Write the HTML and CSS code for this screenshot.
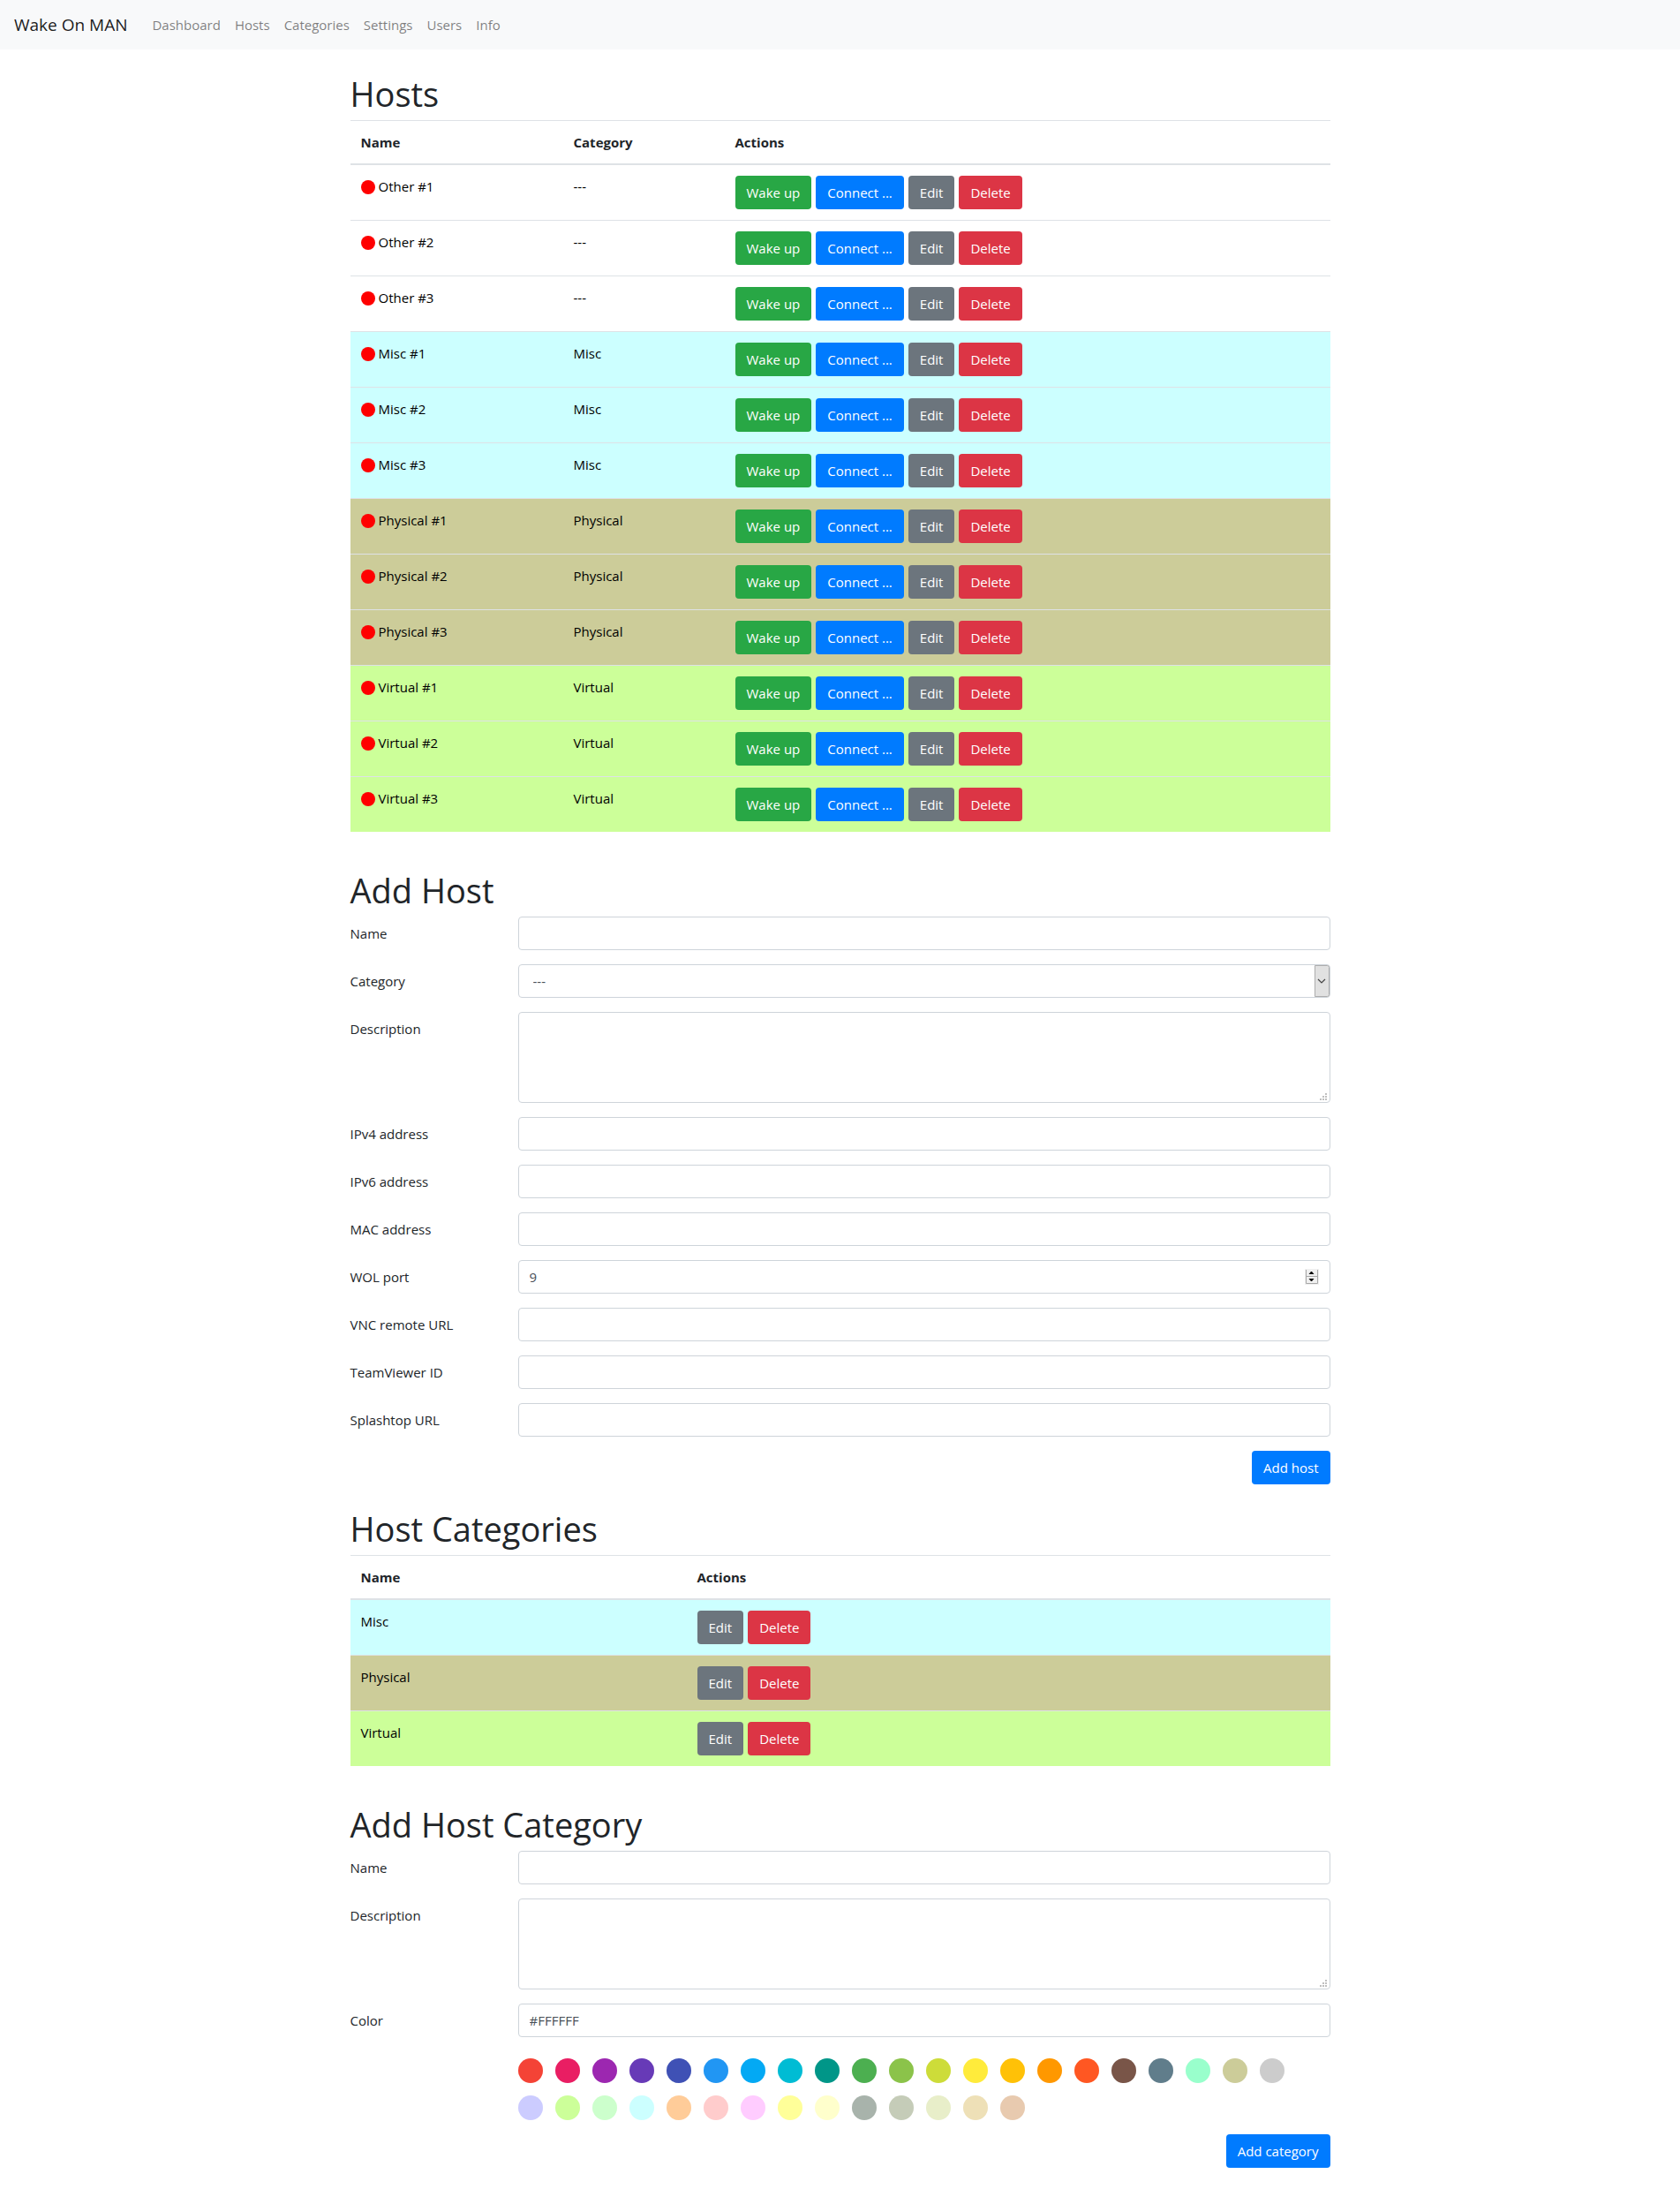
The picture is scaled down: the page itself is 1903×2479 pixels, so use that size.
FILE: index.html
```html
<!DOCTYPE html>
<html lang="en">
<head>
<meta charset="utf-8">
<meta name="viewport" content="width=device-width, initial-scale=1">
<title>Wake On MAN</title>
<link rel="stylesheet" href="styles.css">
</head>
<body>
<nav class="navbar">
  <a class="brand" href="#">Wake On MAN</a>
  <ul class="nav-links">
    <li><a href="#">Dashboard</a></li>
    <li><a href="#hosts">Hosts</a></li>
    <li><a href="#categories">Categories</a></li>
    <li><a href="#">Settings</a></li>
    <li><a href="#">Users</a></li>
    <li><a href="#">Info</a></li>
  </ul>
</nav>
<main class="container">
  <section class="block" id="hosts">
    <h1>Hosts</h1>
    <table class="table">
      <colgroup><col class="col-host"><col class="col-category"><col></colgroup>
      <thead><tr><th scope="col">Name</th><th scope="col">Category</th><th scope="col">Actions</th></tr></thead>
      <tbody>
        <tr><td><span class="status"></span>Other #1</td><td>---</td><td><div class="actions"><button type="button" class="btn success">Wake up</button><button type="button" class="btn primary">Connect ...</button><button type="button" class="btn secondary">Edit</button><button type="button" class="btn danger">Delete</button></div></td></tr>
        <tr><td><span class="status"></span>Other #2</td><td>---</td><td><div class="actions"><button type="button" class="btn success">Wake up</button><button type="button" class="btn primary">Connect ...</button><button type="button" class="btn secondary">Edit</button><button type="button" class="btn danger">Delete</button></div></td></tr>
        <tr><td><span class="status"></span>Other #3</td><td>---</td><td><div class="actions"><button type="button" class="btn success">Wake up</button><button type="button" class="btn primary">Connect ...</button><button type="button" class="btn secondary">Edit</button><button type="button" class="btn danger">Delete</button></div></td></tr>
        <tr class="misc"><td><span class="status"></span>Misc #1</td><td>Misc</td><td><div class="actions"><button type="button" class="btn success">Wake up</button><button type="button" class="btn primary">Connect ...</button><button type="button" class="btn secondary">Edit</button><button type="button" class="btn danger">Delete</button></div></td></tr>
        <tr class="misc"><td><span class="status"></span>Misc #2</td><td>Misc</td><td><div class="actions"><button type="button" class="btn success">Wake up</button><button type="button" class="btn primary">Connect ...</button><button type="button" class="btn secondary">Edit</button><button type="button" class="btn danger">Delete</button></div></td></tr>
        <tr class="misc"><td><span class="status"></span>Misc #3</td><td>Misc</td><td><div class="actions"><button type="button" class="btn success">Wake up</button><button type="button" class="btn primary">Connect ...</button><button type="button" class="btn secondary">Edit</button><button type="button" class="btn danger">Delete</button></div></td></tr>
        <tr class="physical"><td><span class="status"></span>Physical #1</td><td>Physical</td><td><div class="actions"><button type="button" class="btn success">Wake up</button><button type="button" class="btn primary">Connect ...</button><button type="button" class="btn secondary">Edit</button><button type="button" class="btn danger">Delete</button></div></td></tr>
        <tr class="physical"><td><span class="status"></span>Physical #2</td><td>Physical</td><td><div class="actions"><button type="button" class="btn success">Wake up</button><button type="button" class="btn primary">Connect ...</button><button type="button" class="btn secondary">Edit</button><button type="button" class="btn danger">Delete</button></div></td></tr>
        <tr class="physical"><td><span class="status"></span>Physical #3</td><td>Physical</td><td><div class="actions"><button type="button" class="btn success">Wake up</button><button type="button" class="btn primary">Connect ...</button><button type="button" class="btn secondary">Edit</button><button type="button" class="btn danger">Delete</button></div></td></tr>
        <tr class="virtual"><td><span class="status"></span>Virtual #1</td><td>Virtual</td><td><div class="actions"><button type="button" class="btn success">Wake up</button><button type="button" class="btn primary">Connect ...</button><button type="button" class="btn secondary">Edit</button><button type="button" class="btn danger">Delete</button></div></td></tr>
        <tr class="virtual"><td><span class="status"></span>Virtual #2</td><td>Virtual</td><td><div class="actions"><button type="button" class="btn success">Wake up</button><button type="button" class="btn primary">Connect ...</button><button type="button" class="btn secondary">Edit</button><button type="button" class="btn danger">Delete</button></div></td></tr>
        <tr class="virtual"><td><span class="status"></span>Virtual #3</td><td>Virtual</td><td><div class="actions"><button type="button" class="btn success">Wake up</button><button type="button" class="btn primary">Connect ...</button><button type="button" class="btn secondary">Edit</button><button type="button" class="btn danger">Delete</button></div></td></tr>
      </tbody>
    </table>
  </section>

  <section class="block">
    <h1>Add Host</h1>
    <form class="form">
      <div class="row"><label for="host-name">Name</label><input class="control" id="host-name" type="text"></div>
      <div class="row"><label for="host-category">Category</label>
        <div class="field">
          <select class="control" id="host-category"><option>---</option><option>Misc</option><option>Physical</option><option>Virtual</option></select>
          <svg class="drop" viewBox="0 0 17 36" aria-hidden="true"><path d="M.5.5h14q2 0 2 2v31q0 2-2 2H.5z" fill="#e1e1e1" stroke="#adadad"/><path d="M4 16l4 4 4-4" fill="none" stroke="#444" stroke-width="1.200"/></svg>
        </div>
      </div>
      <div class="row"><label for="host-description">Description</label><textarea class="control" id="host-description"></textarea></div>
      <div class="row"><label for="host-ipv4">IPv4 address</label><input class="control" id="host-ipv4" type="text"></div>
      <div class="row"><label for="host-ipv6">IPv6 address</label><input class="control" id="host-ipv6" type="text"></div>
      <div class="row"><label for="host-mac">MAC address</label><input class="control" id="host-mac" type="text"></div>
      <div class="row"><label for="host-port">WOL port</label>
        <div class="field">
          <input class="control" id="host-port" type="number" value="9">
          <svg class="spin" viewBox="0 0 16 18" aria-hidden="true"><path d="M0 0h16v18H0z" fill="#f0f0f0"/><path d="M1.500 1v15.500h13V1M1 8.500h14" fill="none" stroke="#a8a8a8"/><path d="M4.500 6h6L8 3H7zM4.500 11h6L8 14H7z" fill="#000"/></svg>
        </div>
      </div>
      <div class="row"><label for="host-vnc">VNC remote URL</label><input class="control" id="host-vnc" type="text"></div>
      <div class="row"><label for="host-teamviewer">TeamViewer ID</label><input class="control" id="host-teamviewer" type="text"></div>
      <div class="row"><label for="host-splashtop">Splashtop URL</label><input class="control" id="host-splashtop" type="text"></div>
      <div class="submit"><button type="button" class="btn primary">Add host</button></div>
    </form>
  </section>

  <section class="block" id="categories">
    <h1>Host Categories</h1>
    <table class="table">
      <colgroup><col class="col-name"><col></colgroup>
      <thead><tr><th scope="col">Name</th><th scope="col">Actions</th></tr></thead>
      <tbody>
        <tr class="misc"><td>Misc</td><td><div class="actions"><button type="button" class="btn secondary">Edit</button><button type="button" class="btn danger">Delete</button></div></td></tr>
        <tr class="physical"><td>Physical</td><td><div class="actions"><button type="button" class="btn secondary">Edit</button><button type="button" class="btn danger">Delete</button></div></td></tr>
        <tr class="virtual"><td>Virtual</td><td><div class="actions"><button type="button" class="btn secondary">Edit</button><button type="button" class="btn danger">Delete</button></div></td></tr>
      </tbody>
    </table>
  </section>

  <section class="block">
    <h1>Add Host Category</h1>
    <form class="form">
      <div class="row"><label for="cat-name">Name</label><input class="control" id="cat-name" type="text"></div>
      <div class="row"><label for="cat-description">Description</label><textarea class="control" id="cat-description"></textarea></div>
      <div class="row"><label for="cat-color">Color</label>
        <div>
          <input class="control" id="cat-color" type="text" value="#FFFFFF">
          <div class="swatches">
            <button type="button" aria-label="#F44336" style="background:#f44336"></button>
            <button type="button" aria-label="#E91E63" style="background:#e91e63"></button>
            <button type="button" aria-label="#9C27B0" style="background:#9c27b0"></button>
            <button type="button" aria-label="#673AB7" style="background:#673ab7"></button>
            <button type="button" aria-label="#3F51B5" style="background:#3f51b5"></button>
            <button type="button" aria-label="#2196F3" style="background:#2196f3"></button>
            <button type="button" aria-label="#03A9F4" style="background:#03a9f4"></button>
            <button type="button" aria-label="#00BCD4" style="background:#00bcd4"></button>
            <button type="button" aria-label="#009688" style="background:#009688"></button>
            <button type="button" aria-label="#4CAF50" style="background:#4caf50"></button>
            <button type="button" aria-label="#8BC34A" style="background:#8bc34a"></button>
            <button type="button" aria-label="#CDDC39" style="background:#cddc39"></button>
            <button type="button" aria-label="#FFEB3B" style="background:#ffeb3b"></button>
            <button type="button" aria-label="#FFC107" style="background:#ffc107"></button>
            <button type="button" aria-label="#FF9800" style="background:#ff9800"></button>
            <button type="button" aria-label="#FF5722" style="background:#ff5722"></button>
            <button type="button" aria-label="#795548" style="background:#795548"></button>
            <button type="button" aria-label="#607D8B" style="background:#607d8b"></button>
            <button type="button" aria-label="#99FFCC" style="background:#99ffcc"></button>
            <button type="button" aria-label="#CCCC99" style="background:#cccc99"></button>
            <button type="button" aria-label="#CCCCCC" style="background:#cccccc"></button>
            <button type="button" aria-label="#CCCCFF" style="background:#ccccff"></button>
            <button type="button" aria-label="#CCFF99" style="background:#ccff99"></button>
            <button type="button" aria-label="#CCFFCC" style="background:#ccffcc"></button>
            <button type="button" aria-label="#CCFFFF" style="background:#ccffff"></button>
            <button type="button" aria-label="#FFCC99" style="background:#ffcc99"></button>
            <button type="button" aria-label="#FFCCCC" style="background:#ffcccc"></button>
            <button type="button" aria-label="#FFCCFF" style="background:#ffccff"></button>
            <button type="button" aria-label="#FFFF99" style="background:#ffff99"></button>
            <button type="button" aria-label="#FFFFCC" style="background:#ffffcc"></button>
            <button type="button" aria-label="#A8B3AB" style="background:#a8b3ab"></button>
            <button type="button" aria-label="#C5CCB8" style="background:#c5ccb8"></button>
            <button type="button" aria-label="#E8EEC9" style="background:#e8eec9"></button>
            <button type="button" aria-label="#EEE0B7" style="background:#eee0b7"></button>
            <button type="button" aria-label="#E8CAAF" style="background:#e8caaf"></button>
          </div>
        </div>
      </div>
      <div class="submit"><button type="button" class="btn primary">Add category</button></div>
    </form>
  </section>
</main>
</body>
</html>
```
FILE: styles.css
```css
*, *::before, *::after { box-sizing: border-box; }

body {
  margin: 0;
  background: #fff;
  color: #212529;
  font: 15px/24px "Open Sans", "Noto Sans", sans-serif;
}

input, select, textarea, button { font: inherit; }

.navbar {
  display: flex;
  align-items: center;
  min-height: 56px;
  padding: 8px 16px;
  background: #f8f9fa;
}
.brand {
  margin-right: 20px;
  color: rgba(0, 0, 0, .9);
  font-size: 19px;
  line-height: 30px;
  text-decoration: none;
}
.nav-links { display: flex; margin: 0; padding: 0; list-style: none; }
.nav-links a {
  display: block;
  padding: 8px;
  color: rgba(0, 0, 0, .5);
  text-decoration: none;
}

.container { max-width: 1140px; margin: 0 auto; padding: 0 15px; }
.block { padding: 24px 0 0; }
.block:last-child { padding-bottom: 24px; }

h1 { margin: 0 0 4px; font-size: 38px; font-weight: 400; line-height: 52px; }

.table {
  width: 100%;
  margin-bottom: 16px;
  border-collapse: collapse;
  table-layout: fixed;
}
.col-host { width: 241px; }
.col-category { width: 183px; }
.col-name { width: 381px; }
th, td {
  padding: 12px;
  border-top: 1px solid #dee2e6;
  text-align: left;
  vertical-align: top;
}
th { border-bottom: 2px solid #dee2e6; font-weight: 700; }
td { color: #000; }
.misc { background: #ccffff; }
.physical { background: #cccc99; }
.virtual { background: #ccff99; }

.status {
  display: inline-block;
  width: 16px;
  height: 16px;
  margin-right: 4px;
  border-radius: 50%;
  background: red;
  vertical-align: -3px;
}

.actions { display: flex; gap: 5px; }
.btn {
  padding: 6px 12px;
  border: 1px solid transparent;
  border-radius: 4px;
  color: #fff;
  line-height: 24px;
  cursor: pointer;
}
.success { background: #28a745; }
.primary { background: #007bff; }
.secondary { background: #6c757d; }
.danger { background: #dc3545; }

.form { display: grid; gap: 16px; }
.row { display: grid; grid-template-columns: 190px 1fr; align-items: start; }
.row label { padding: 7px 0; }
.control {
  display: block;
  width: 100%;
  height: 38px;
  padding: 6px 12px;
  border: 1px solid #ced4da;
  border-radius: 4px;
  background: #fff;
  color: #495057;
}
textarea.control { height: 103px; resize: vertical; }
textarea::-webkit-resizer {
  background: url("data:image/svg+xml,%3Csvg xmlns='http://www.w3.org/2000/svg' width='11' height='11'%3E%3Cpath d='M0 7h2v2H0zM3 7h2v2H3zM6 7h2v2H6zM3 4h2v2H3zM6 4h2v2H6zM6 1h2v2H6z' fill='%23bfbfbf'/%3E%3C/svg%3E") right bottom no-repeat;
}
select.control { padding-left: 16px; appearance: none; }
input[type="number"] { appearance: textfield; }
input[type="number"]::-webkit-inner-spin-button { display: none; }

.field { position: relative; }
.drop, .spin { position: absolute; pointer-events: none; }
.drop { top: 1px; right: 1px; width: 17px; height: 36px; }
.spin { top: 10px; right: 13px; width: 16px; height: 18px; }

.swatches { display: flex; flex-wrap: wrap; gap: 14px; padding: 24px 14px 0 0; }
.swatches button {
  width: 28px;
  height: 28px;
  padding: 0;
  border: 0;
  border-radius: 50%;
  cursor: pointer;
}

.submit { display: flex; justify-content: flex-end; }
```
